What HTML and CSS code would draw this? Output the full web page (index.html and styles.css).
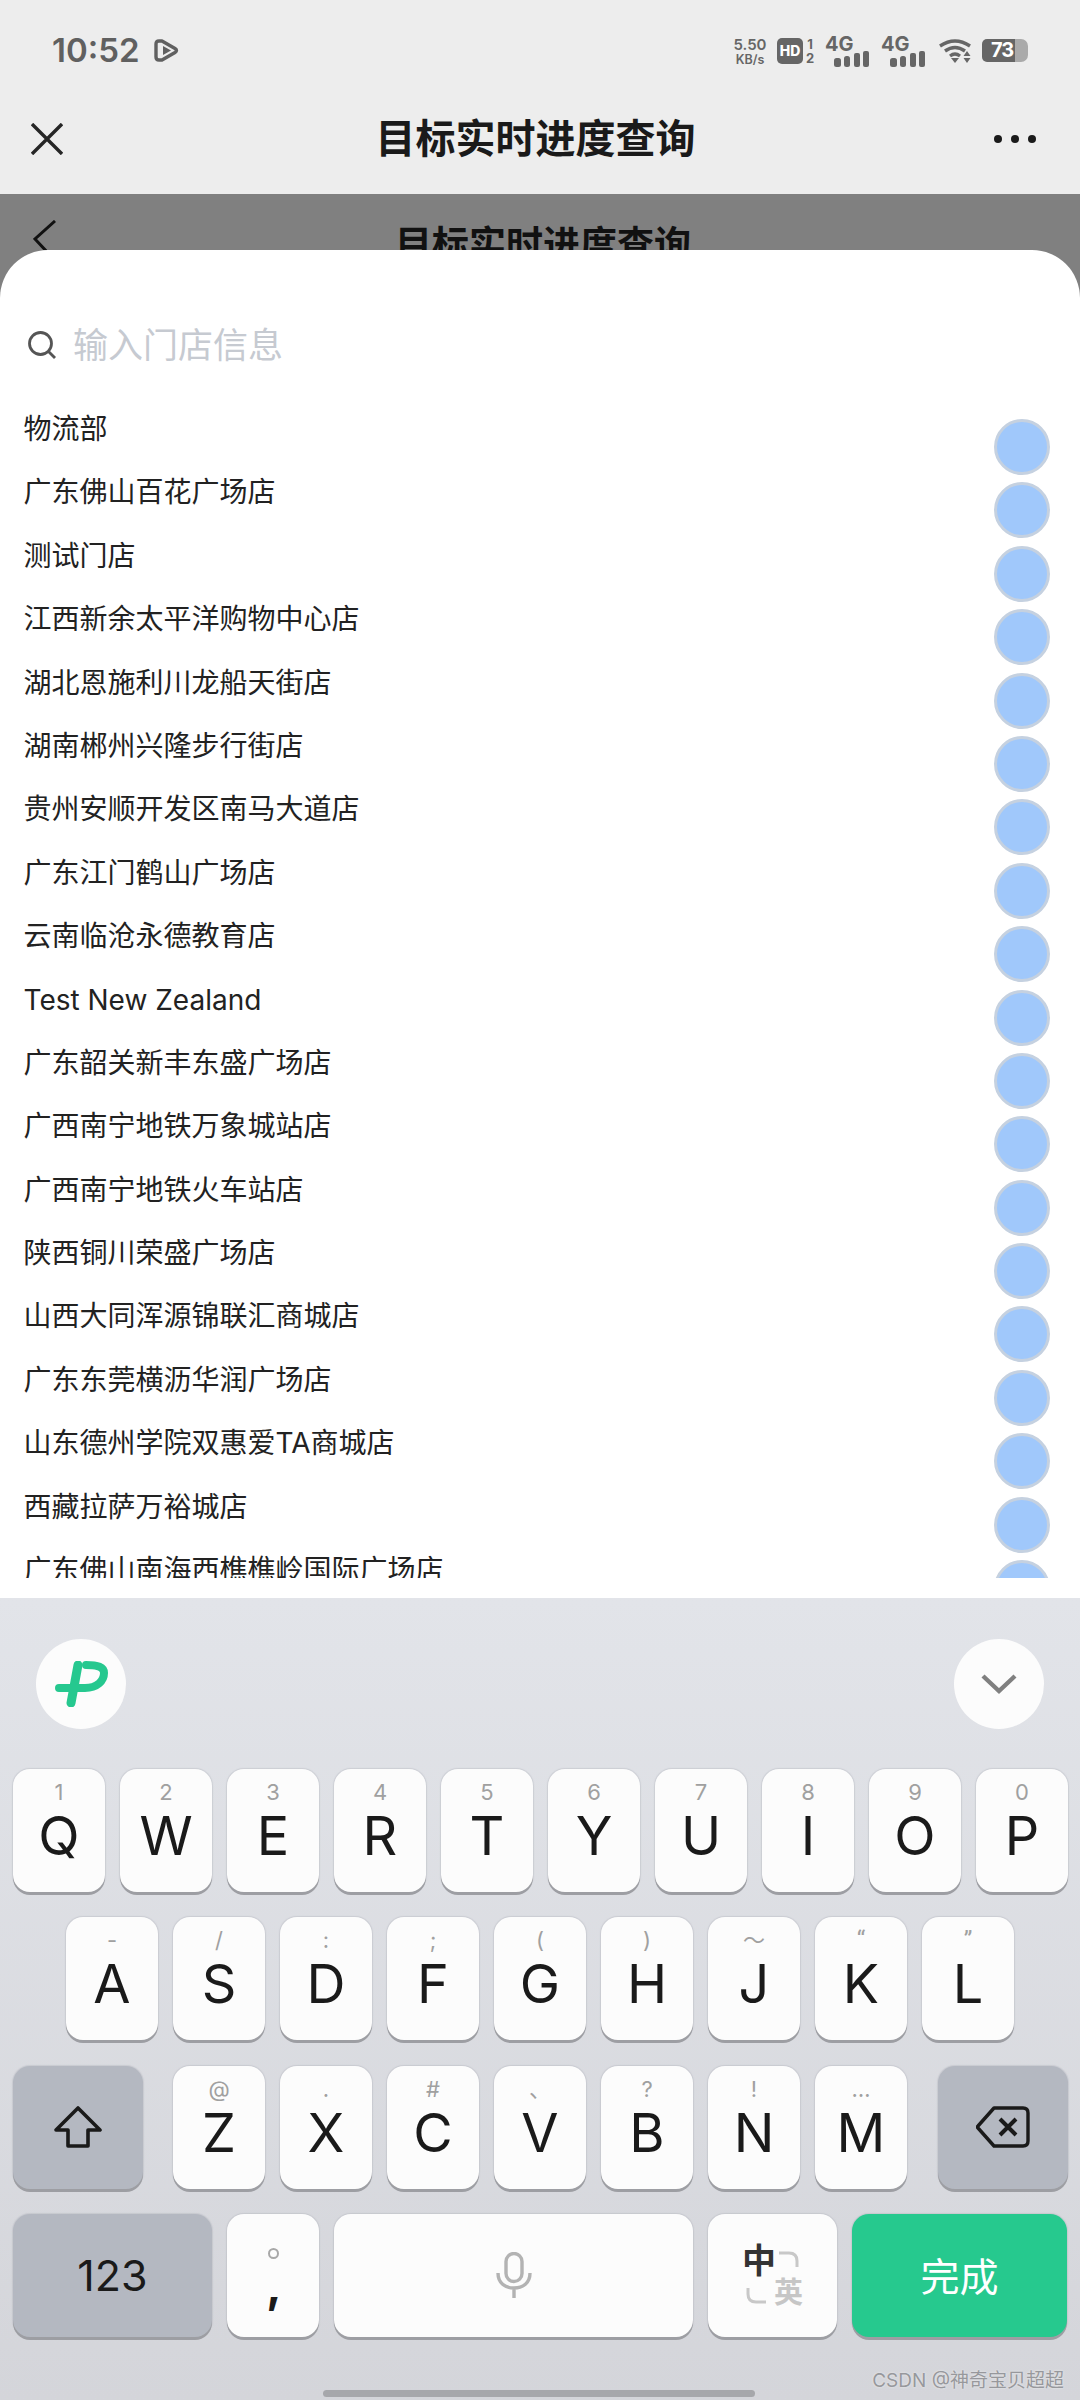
FILE: index.html

```html
<!DOCTYPE html>
<html lang="zh-CN">
<head>
  <meta charset="UTF-8" />
  <title>目标实时进度查询</title>
  <link rel="stylesheet" href="styles.css">
</head>
<body>

<div class="top-bar">
  <div class="status-bar">
    <div class="status-left">
      <span class="clock">10:52</span>
      <svg class="play-icon" viewBox="0 0 25 23" width="25" height="23"><path d="M8 2H5Q2 2 2 5V18Q2 21 5 21H8L21 13.5Q24 11.5 21 9.5Z" fill="none" stroke="#606060" stroke-width="3.4" stroke-linejoin="round"/><path d="M9 7L17 11.5L9 16Z" fill="#606060"/></svg>
    </div>
    <div class="status-right">
      <div class="net-speed"><span>5.50</span><span class="net-unit">KB/s</span></div>
      <div class="hd-badge">HD</div>
      <div class="hd-nums"><span>1</span><span>2</span></div>
      <div class="net"><span class="net-text">4G</span>
        <svg viewBox="0 0 36 16" width="36" height="16"><rect x="0" y="7" width="7" height="9" rx="2.5"/><rect x="10" y="5" width="6" height="11" rx="2.5"/><rect x="20" y="2" width="6" height="14" rx="2"/><rect x="29" y="0" width="6" height="16" rx="2"/></svg>
      </div>
      <div class="net"><span class="net-text">4G</span>
        <svg viewBox="0 0 36 16" width="36" height="16"><rect x="0" y="7" width="7" height="9" rx="2.5"/><rect x="10" y="5" width="6" height="11" rx="2.5"/><rect x="20" y="2" width="6" height="14" rx="2"/><rect x="29" y="0" width="6" height="16" rx="2"/></svg>
      </div>
      <svg class="wifi-icon" viewBox="0 0 32 25" width="32" height="25"><path d="M1 8Q16 -2 31 8" fill="none" stroke="#666" stroke-width="3.4"/><path d="M6 13Q16 6 26 13" fill="none" stroke="#666" stroke-width="3.4"/><path d="M11 18Q16 14 21 18" fill="none" stroke="#666" stroke-width="3.2"/><path d="M12 20H20L16 25Z" fill="#666"/><path d="M28 13L31.5 18H24.5Z M24.5 20H31.5L28 25Z" fill="#666"/></svg>
      <div class="battery">73</div>
    </div>
  </div>
  <div class="nav-bar">
    <svg viewBox="0 0 32 32" width="32" height="32"><path d="M1 1L31 31M31 1L1 31" stroke="#262626" stroke-width="3.4"/></svg>
    <div class="nav-title">目标实时进度查询</div>
    <svg class="nav-more" viewBox="0 0 46 12" width="46" height="12"><circle cx="4" cy="6" r="4"/><circle cx="21" cy="6" r="4"/><circle cx="38" cy="6" r="4"/></svg>
  </div>
</div>

<div class="page">
  <div class="dim-bar">
    <svg viewBox="0 0 24 40" width="24" height="40"><path d="M22 1L2 19L16 34" fill="none" stroke="#111" stroke-width="3"/></svg>
    <div class="dim-title">目标实时进度查询</div>
    <span></span>
  </div>

  <div class="sheet">
    <div class="search">
      <svg viewBox="0 0 28 28" width="28" height="28"><circle cx="12.5" cy="12.5" r="11" fill="none" stroke="#555" stroke-width="2.8"/><path d="M20 20L27 27" stroke="#555" stroke-width="2.8"/></svg>
      <span class="search-hint">输入门店信息</span>
    </div>

    <div class="list">
      <div class="row"><span>物流部</span><i class="dot"></i></div>
      <div class="row"><span>广东佛山百花广场店</span><i class="dot"></i></div>
      <div class="row"><span>测试门店</span><i class="dot"></i></div>
      <div class="row"><span>江西新余太平洋购物中心店</span><i class="dot"></i></div>
      <div class="row"><span>湖北恩施利川龙船天街店</span><i class="dot"></i></div>
      <div class="row"><span>湖南郴州兴隆步行街店</span><i class="dot"></i></div>
      <div class="row"><span>贵州安顺开发区南马大道店</span><i class="dot"></i></div>
      <div class="row"><span>广东江门鹤山广场店</span><i class="dot"></i></div>
      <div class="row"><span>云南临沧永德教育店</span><i class="dot"></i></div>
      <div class="row"><span>Test New Zealand</span><i class="dot"></i></div>
      <div class="row"><span>广东韶关新丰东盛广场店</span><i class="dot"></i></div>
      <div class="row"><span>广西南宁地铁万象城站店</span><i class="dot"></i></div>
      <div class="row"><span>广西南宁地铁火车站店</span><i class="dot"></i></div>
      <div class="row"><span>陕西铜川荣盛广场店</span><i class="dot"></i></div>
      <div class="row"><span>山西大同浑源锦联汇商城店</span><i class="dot"></i></div>
      <div class="row"><span>广东东莞横沥华润广场店</span><i class="dot"></i></div>
      <div class="row"><span>山东德州学院双惠爱TA商城店</span><i class="dot"></i></div>
      <div class="row"><span>西藏拉萨万裕城店</span><i class="dot"></i></div>
      <div class="row"><span>广东佛山南海西樵樵岭国际广场店</span><i class="dot"></i></div>
    </div>
  </div>
</div>

<div class="keyboard">
  <div class="kb-tools">
    <div class="round-btn">
      <svg viewBox="0 0 53 46" width="53" height="46"><path d="M23 4L16 42" fill="none" stroke="#26c88f" stroke-width="9" stroke-linecap="round"/><path d="M4 27H30C42 27 49 20 49 12C49 6 43 4 31 4" fill="none" stroke="#26c88f" stroke-width="8" stroke-linecap="round"/></svg>
    </div>
    <div class="round-btn">
      <svg viewBox="0 0 36 22" width="36" height="22"><path d="M2 3L18 18L34 3" fill="none" stroke="#808080" stroke-width="4.4"/></svg>
    </div>
  </div>

  <div class="kb-rows">
    <div class="kb-row">
      <div class="key"><span class="hint">1</span><span class="letter">Q</span></div>
      <div class="key"><span class="hint">2</span><span class="letter">W</span></div>
      <div class="key"><span class="hint">3</span><span class="letter">E</span></div>
      <div class="key"><span class="hint">4</span><span class="letter">R</span></div>
      <div class="key"><span class="hint">5</span><span class="letter">T</span></div>
      <div class="key"><span class="hint">6</span><span class="letter">Y</span></div>
      <div class="key"><span class="hint">7</span><span class="letter">U</span></div>
      <div class="key"><span class="hint">8</span><span class="letter">I</span></div>
      <div class="key"><span class="hint">9</span><span class="letter">O</span></div>
      <div class="key"><span class="hint">0</span><span class="letter">P</span></div>
    </div>
    <div class="kb-row kb-row-center">
      <div class="key"><span class="hint">-</span><span class="letter">A</span></div>
      <div class="key"><span class="hint">/</span><span class="letter">S</span></div>
      <div class="key"><span class="hint">:</span><span class="letter">D</span></div>
      <div class="key"><span class="hint">;</span><span class="letter">F</span></div>
      <div class="key"><span class="hint">(</span><span class="letter">G</span></div>
      <div class="key"><span class="hint">)</span><span class="letter">H</span></div>
      <div class="key"><span class="hint">～</span><span class="letter">J</span></div>
      <div class="key"><span class="hint hint-quote">“</span><span class="letter">K</span></div>
      <div class="key"><span class="hint hint-quote">”</span><span class="letter">L</span></div>
    </div>
    <div class="kb-row">
      <div class="key key-fn key-side">
        <svg viewBox="0 0 48 42" width="48" height="42"><path d="M24 2L46 24H34V40H14V24H2Z" fill="none" stroke="#1a1a1a" stroke-width="3.6" stroke-linejoin="round"/></svg>
      </div>
      <div class="key key-after-side"><span class="hint">@</span><span class="letter">Z</span></div>
      <div class="key"><span class="hint">.</span><span class="letter">X</span></div>
      <div class="key"><span class="hint">#</span><span class="letter">C</span></div>
      <div class="key"><span class="hint">、</span><span class="letter">V</span></div>
      <div class="key"><span class="hint">?</span><span class="letter">B</span></div>
      <div class="key"><span class="hint">!</span><span class="letter">N</span></div>
      <div class="key"><span class="hint">…</span><span class="letter">M</span></div>
      <div class="key key-fn key-side key-before-side">
        <svg viewBox="0 0 54 42" width="54" height="42"><path d="M18 2H47Q52 2 52 7V35Q52 40 47 40H18L2 22Q1 21 2 20Z" fill="none" stroke="#1a1a1a" stroke-width="3.4" stroke-linejoin="round"/><path d="M24 13L40 29M40 13L24 29" stroke="#1a1a1a" stroke-width="4"/></svg>
      </div>
    </div>
    <div class="kb-row">
      <div class="key key-fn key-num">123</div>
      <div class="key key-comma"><i class="ring"></i><span class="comma">,</span></div>
      <div class="key key-space">
        <svg viewBox="0 0 36 46" width="36" height="46"><rect x="10" y="1.5" width="16" height="28" rx="8" fill="none" stroke="#b3b3b3" stroke-width="3.4"/><path d="M2 21C2 31 9 36 18 36C27 36 34 31 34 21M18 36V46" fill="none" stroke="#b3b3b3" stroke-width="3.4"/></svg>
      </div>
      <div class="key key-lang">
        <div class="lang-grid">
          <span class="lang-main">中</span>
          <svg viewBox="0 0 20 16" width="20" height="16"><path d="M0 2H10Q18 2 18 10V16" fill="none" stroke="#c8c8c8" stroke-width="3"/></svg>
          <svg class="lang-arc-low" viewBox="0 0 20 16" width="20" height="16"><path d="M2 0V6Q2 14 10 14H20" fill="none" stroke="#c8c8c8" stroke-width="3"/></svg>
          <span class="lang-sub">英</span>
        </div>
      </div>
      <div class="key key-done">完成</div>
    </div>
  </div>

  <div class="home-bar"></div>
  <div class="watermark">CSDN @神奇宝贝超超</div>
</div>

</body>
</html>
```

FILE: styles.css

```css
* { box-sizing: border-box; }
body { margin: 0; width: 1080px; height: 2400px; overflow: hidden; background: #fff; color: #222;
       font-family: Inter, "Noto Sans CJK SC", sans-serif; }

/* top bar */
.top-bar { height: 194px; background: #ededed; }
.status-bar { height: 100px; display: flex; justify-content: space-between; align-items: center; padding: 0 52px; }
.status-left { display: flex; align-items: center; gap: 14px; }
.clock { font-size: 33px; font-weight: 600; color: #606060; line-height: 1; }
.play-icon { display: block; }
.status-right { display: flex; align-items: center; height: 32px; }
.net-speed { width: 36px; display: flex; flex-direction: column; align-items: center; color: #666; font-size: 15px; font-weight: 600; line-height: 15px; margin-right: 9px; margin-top: 2px; }
.net-unit { font-size: 12.5px; line-height: 13px; margin-top: 1px; }
.hd-badge { width: 26px; height: 26px; border-radius: 5px; background: #666; color: #fff; font-size: 14px; font-weight: 800; line-height: 26px; text-align: center; margin-top: 1px; }
.hd-nums { width: 12px; margin: 1px 9px 0 1px; display: flex; flex-direction: column; gap: 2px; color: #666; font-size: 13px; font-weight: 700; line-height: 12px; text-align: center; }
.net { width: 45px; height: 31px; margin: 2px 11px 0 0; display: flex; flex-direction: column; fill: #666; }
.net svg { margin: -1px 0 0 9px; display: block; }
.net-text { height: 16px; font-size: 20px; font-weight: 700; line-height: 16px; color: #666; }
.wifi-icon { margin-right: 11px; margin-left: 2px; }
.battery { width: 46px; height: 23px; padding-left: 9px; border-radius: 5px 7px 7px 5px; background: linear-gradient(90deg, #666 33px, #aaa 33px); color: #fff; font-size: 20px; font-weight: 700; line-height: 23px; letter-spacing: -1px; }

.nav-bar { height: 78px; display: grid; grid-template-columns: 1fr auto 1fr; align-items: center; padding: 0 40px 0 31px; }
.nav-title { font-size: 40px; font-weight: 700; color: #1a1a1a; line-height: 48px; }
.nav-more { justify-self: end; fill: #1a1a1a; }

/* dimmed page behind the sheet */
.page { background: #808080; }
.dim-bar { height: 56px; overflow: hidden; display: grid; grid-template-columns: 1fr auto 1fr; padding: 29px 27px 0 33px; align-items: start; }
.dim-bar svg { margin-top: -3px; }
.dim-title { font-size: 37px; font-weight: 700; color: #111; line-height: 44px; }

/* bottom sheet */
.sheet { height: 1348px; background: #fff; border-radius: 48px 48px 0 0; padding: 70px 0 20px; }
.search { height: 50px; display: flex; align-items: center; gap: 17px; padding-left: 28px; }
.search-hint { font-size: 35px; line-height: 46px; color: #c6cad1; }
.list { height: 1181px; margin-top: 27px; overflow: hidden; }
.row { height: 63.4px; display: flex; justify-content: space-between; padding: 0 30px 0 23.5px; font-size: 28px; line-height: 64.5px; color: #222; }
.dot { flex: none; width: 56px; height: 56px; margin-top: 22px; border-radius: 50%; background: #a0c8fb; border: 3px solid #c5d1e0; }

/* keyboard */
.keyboard { position: relative; height: 802px; padding: 41px 12px 0 13px; background: linear-gradient(#e2e4e9, #d4d5da); }
.kb-tools { display: flex; justify-content: space-between; padding: 0 24px 0 23px; margin-bottom: 40px; }
.round-btn { width: 90px; height: 90px; border-radius: 50%; background: #fcfcfc; display: flex; align-items: center; justify-content: center; }
.kb-rows { display: flex; flex-direction: column; gap: 25.3px; }
.kb-row { display: flex; gap: 15px; }
.kb-row-center { justify-content: center; padding-right: 1px; }
.key { flex: none; width: 92px; height: 123px; border-radius: 17px; background: #fcfcfc; box-shadow: 0 3px 0 #9d9ea3, 0 0 1px 1px rgba(170,172,180,.35);
       display: flex; flex-direction: column; align-items: center; padding-top: 10px; color: #1a1a1a; }
.hint { height: 26px; font-size: 22px; line-height: 26px; color: #a0a0a0; }
.hint-quote { font-family: Roboto, sans-serif; font-size: 24px; }
.letter { height: 62px; font-size: 54px; line-height: 62px; }

.key-fn { background: #b4b8c1; }
.key-side { width: 130px; padding-top: 0; justify-content: center; }
.key-after-side { margin-left: 15px; }
.key-before-side { margin-left: 16px; }
.key-num { width: 199px; padding-top: 0; justify-content: center; font-size: 43px; }
.key-comma { padding-top: 34px; }
.ring { width: 11px; height: 11px; border-radius: 50%; border: 2px solid #a8a8a8; }
.comma { margin: 6px 0 0 2px; font-size: 46px; font-weight: 700; line-height: 40px; }
.key-space { width: 359px; padding-top: 0; justify-content: center; }
.key-lang { width: 129px; padding-top: 0; justify-content: center; }
.lang-grid { display: grid; grid-template-columns: 32px 29px; grid-template-rows: 35px 29px; }
.lang-main { font-size: 34px; font-weight: 700; line-height: 35px; color: #333; }
.lang-sub { font-size: 29px; font-weight: 700; line-height: 29px; color: #c6c6c6; }
.lang-grid svg { margin: 8px 0 0 5px; }
.lang-grid .lang-arc-low { margin: 10px 0 0 4px; }
.key-done { width: 215px; padding: 0 0 2px; justify-content: center; background: #26c98e; color: #fff; font-size: 39px; }

.home-bar { width: 432px; height: 7px; border-radius: 4px; background: #a6a7ab; margin: 53px auto 0; position: relative; left: -2px; }
.watermark { position: absolute; right: 16px; bottom: 6px; font-size: 19px; line-height: 26px; color: #97989c; text-shadow: 0 0 2px #f2f2f2; }
```
